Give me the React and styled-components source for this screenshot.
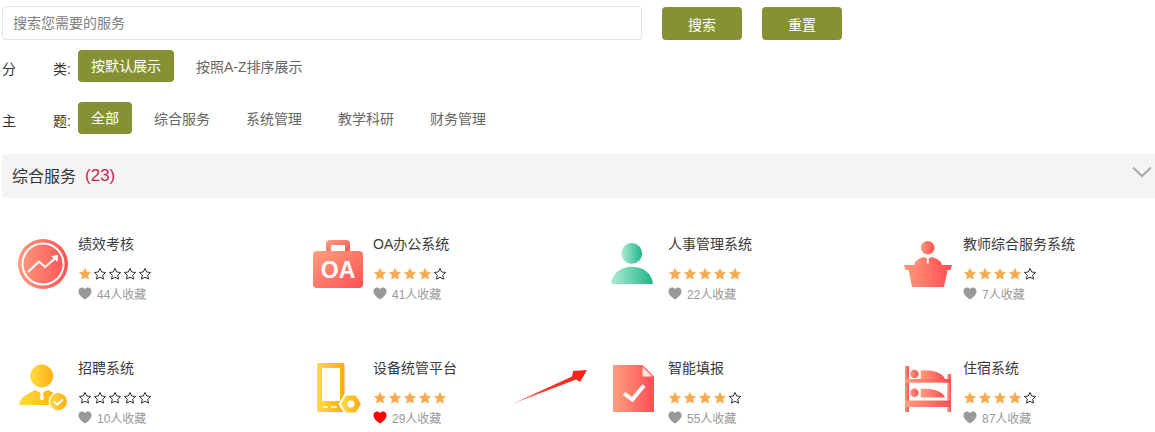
import React from 'react';
import styled, { createGlobalStyle } from 'styled-components';

const Global = createGlobalStyle`
  html, body { margin: 0; padding: 0; background: #fff; }
  body { font-family: "Liberation Sans", "Noto Sans CJK SC", sans-serif; font-size: 14px; color: #333; overflow: hidden; }
`;

const Page = styled.div`
  position: relative;
  width: 1155px;
  height: 432px;
  padding: 6px 0 0 2px;
  box-sizing: border-box;
  overflow: hidden;
`;

const SearchRow = styled.div`
  display: flex;
  align-items: flex-start;
  height: 34px;
`;

const SearchInput = styled.input`
  width: 640px;
  height: 34px;
  box-sizing: border-box;
  padding: 0 10px;
  border: 1px solid #e3e3e3;
  border-radius: 4px;
  font: inherit;
  outline: none;
  &::placeholder { color: #808080; opacity: 1; }
`;

const ActionButton = styled.button`
  width: 80px;
  height: 33px;
  margin: 1px 0 0 20px;
  border: 0;
  border-radius: 4px;
  background: #869136;
  color: #fff;
  font: inherit;
  padding: 0;
`;

const FilterRow = styled.div`
  display: flex;
  align-items: center;
  height: 32px;
  margin-top: ${p => p.$top}px;
`;

const FilterLabel = styled.div`
  width: 69px;
  margin-right: 7px;
  display: flex;
  justify-content: space-between;
  padding-top: 3px;
  color: #333;
`;

const Tab = styled.div`
  height: 32px;
  line-height: 32px;
  padding: ${p => (p.$active ? '0 13px' : '1px 14px 0 13px')};
  box-sizing: border-box;
  margin-right: 9px;
  border-radius: 4px;
  background: ${p => (p.$active ? '#869136' : 'transparent')};
  color: ${p => (p.$active ? '#fff' : '#666')};
  white-space: nowrap;
`;

const SectionBar = styled.div`
  display: flex;
  align-items: center;
  height: 44px;
  margin-top: 20px;
  padding: 0 3px 0 10px;
  background: #f4f4f4;
  font-size: 16px;
  color: #333;
`;

const SectionTitle = styled.div`
  display: flex;
  align-items: center;
  margin-top: -3px;
`;

const Count = styled.span`
  margin-left: 9px;
  margin-top: 2px;
  font-size: 17px;
  color: #c7254e;
`;

const Chevron = styled.svg`
  width: 20px;
  height: 12px;
  margin-left: auto;
  margin-top: -8px;
`;

const Grid = styled.div`
  display: grid;
  grid-template-columns: repeat(4, 295px);
  grid-auto-rows: 124px;
  padding-top: 36px;
`;

const Card = styled.div`
  display: flex;
  padding-left: 16px;
`;

const IconBox = styled.svg`
  width: 50px;
  height: 50px;
  flex: none;
  margin: 5px 10px 0 0;
  display: block;
  overflow: visible;
`;

const Info = styled.div`
  display: flex;
  flex-direction: column;
`;

const Name = styled.div`
  height: 20px;
  line-height: 20px;
  color: #3a3a3a;
  white-space: nowrap;
`;

const Stars = styled.div`
  display: flex;
  gap: 1px;
  margin-top: 13px;
  height: 14px;
`;

const Star = styled.svg`
  width: 14px;
  height: 14px;
  display: block;
`;

const Fav = styled.div`
  display: flex;
  align-items: center;
  margin-top: 5px;
  height: 14px;
  font-size: 12px;
  color: #999;
`;

const Heart = styled.svg`
  width: 14px;
  height: 13px;
  margin-right: 5px;
  display: block;
`;

const Arrow = styled.svg`
  position: absolute;
  left: 510px;
  top: 366px;
  width: 80px;
  height: 42px;
`;

const STAR = 'M7 1.4 L8.7 5 L12.6 5.5 L9.7 8.2 L10.5 12.1 L7 10.2 L3.5 12.1 L4.3 8.2 L1.4 5.5 L5.3 5 Z';

const Rating = ({ value }) => (
  <Stars>
    {[0, 1, 2, 3, 4].map(i => (
      <Star key={i} viewBox="0 0 14 14">
        {i < value
          ? <path d={STAR} fill="#f6ab52" stroke="#f6ab52" strokeWidth="0.6" strokeLinejoin="round" />
          : <path d={STAR} fill="#fff" stroke="#333" strokeWidth="1" strokeLinejoin="round" />}
      </Star>
    ))}
  </Stars>
);

const Grad = ({ id, from, to, diagonal }) => (
  <defs>
    <linearGradient id={id} x1="0" y1="0" x2="1" y2={diagonal ? 1 : 0}>
      <stop offset="0" stopColor={from} />
      <stop offset="1" stopColor={to} />
    </linearGradient>
  </defs>
);

const icons = {
  trend: (
    <>
      <Grad id="g1" from="#ff9a7e" to="#ff5254" />
      <circle cx="25" cy="25" r="25" fill="url(#g1)" />
      <circle cx="25" cy="25" r="20.5" fill="none" stroke="#fff" strokeWidth="2" />
      <path d="M10 33 L21 22.5 L27 28 L37 19.5" fill="none" stroke="#fff" strokeWidth="2" />
      <path d="M33 17 L40 16 L39.5 23 Z" fill="#fff" />
    </>
  ),
  oa: (
    <>
      <Grad id="g2" from="#ffa07e" to="#ff5054" diagonal />
      <path fillRule="evenodd" d="M17 1 H33 Q37 1 37 5 V13 H32 V6 H18 V13 H13 V5 Q13 1 17 1 Z" fill="url(#g2)" />
      <rect x="0" y="12" width="50" height="37" rx="4" fill="url(#g2)" />
      <text x="25" y="38.5" textAnchor="middle" fontFamily="Liberation Sans" fontWeight="700" fontSize="23" fill="#fff">OA</text>
    </>
  ),
  person: (
    <>
      <Grad id="g3" from="#aeecd6" to="#1db588" />
      <circle cx="23.7" cy="14.3" r="10.4" fill="url(#g3)" />
      <path d="M3 45 C4 34 13 27.7 24 27.7 C35 27.7 44 34 45 45 Z" fill="url(#g3)" />
    </>
  ),
  podium: (
    <>
      <Grad id="g4" from="#ff9a7e" to="#ff4d52" />
      <circle cx="24.7" cy="8.7" r="6.8" fill="url(#g4)" />
      <path d="M11 26 C12 21 16 19.5 21 18 L24.7 20 L28.5 18 C33 19.5 38 21 39 26 Z" fill="url(#g4)" />
      <path d="M24 20 H25.6 L25.8 24.6 H23.8 Z" fill="#fff" />
      <path d="M1 26 H49 L47.6 31 H44.6 L41 48 H9 L5.6 31 H2.4 Z" fill="url(#g4)" />
    </>
  ),
  staff: (
    <>
      <Grad id="g5" from="#ffdc42" to="#ffae12" />
      <circle cx="23.7" cy="13" r="11.4" fill="url(#g5)" />
      <path d="M1 42 C2 33 10 31 17 27 L23 30 L30 27 C35 29 38 31 39 42 Z" fill="url(#g5)" />
      <path d="M22 28.5 H25.6 L25 31.4 L26 35.5 L23.8 37.5 L21.7 35.5 L22.6 31.4 Z" fill="#fff" />
      <circle cx="40.3" cy="38.7" r="9.8" fill="#fff" />
      <circle cx="40.3" cy="38.7" r="8.6" fill="url(#g5)" />
      <path d="M35.8 38.6 L39.2 41.6 L44.8 36.4" fill="none" stroke="#fff" strokeWidth="2" />
    </>
  ),
  device: (
    <>
      <Grad id="g6" from="#ffdc42" to="#ffa912" />
      <rect x="4" y="0" width="27.5" height="49" rx="2" fill="url(#g6)" />
      <rect x="9" y="5" width="18" height="33" fill="#fff" />
      <path d="M10 44 H15 M18 44 H24" stroke="#fff" strokeWidth="1.4" />
      <path d="M25.5 41 L31.5 31 H44 L50 41 L44 51 H31.5 Z" fill="#fff" />
      <path d="M28 41 L33 32.5 H42.8 L47.8 41 L42.8 49.5 H33 Z" fill="url(#g6)" />
      <circle cx="37.8" cy="41" r="3.6" fill="#fff" />
    </>
  ),
  report: (
    <>
      <Grad id="g7" from="#ff9f7e" to="#ff4f54" />
      <path d="M5 2 H34.5 L46 13.5 V49 H5 Z" fill="url(#g7)" />
      <path d="M34.5 4 L44.5 13.5 H34.5 Z" fill="#ffe5e0" />
      <path d="M16 30.5 L24.3 36.5 L36 22.5" fill="none" stroke="#fff" strokeWidth="4" />
    </>
  ),
  bunk: (
    <>
      <Grad id="g8" from="#ff9f7e" to="#ff4d52" />
      <g fill="url(#g8)">
        <rect x="2" y="3" width="4" height="46" />
        <rect x="44.3" y="11" width="3.7" height="38" />
        <rect x="2" y="16" width="46" height="3.7" />
        <rect x="2" y="37.5" width="46" height="6.5" />
        <circle cx="11.3" cy="11" r="4.2" />
        <circle cx="11.3" cy="29.8" r="4.2" />
        <path d="M17.7 16 V7.5 C28 6.5 39 9 42 16 Z" />
        <path d="M17.7 34.5 V26 C28 25 39 27.5 42 34.5 Z" />
      </g>
    </>
  ),
};

const services = [
  { name: '绩效考核', stars: 1, count: 44, icon: 'trend' },
  { name: 'OA办公系统', stars: 4, count: 41, icon: 'oa' },
  { name: '人事管理系统', stars: 5, count: 22, icon: 'person' },
  { name: '教师综合服务系统', stars: 4, count: 7, icon: 'podium' },
  { name: '招聘系统', stars: 0, count: 10, icon: 'staff' },
  { name: '设备统管平台', stars: 5, count: 29, icon: 'device', liked: true },
  { name: '智能填报', stars: 4, count: 55, icon: 'report' },
  { name: '住宿系统', stars: 4, count: 87, icon: 'bunk' },
];

const Filter = ({ a, b, tabs, top }) => (
  <FilterRow $top={top}>
    <FilterLabel><span>{a}</span><span>{b}:</span></FilterLabel>
    {tabs.map((t, i) => <Tab key={t} $active={i === 0}>{t}</Tab>)}
  </FilterRow>
);

export default function App() {
  return (
    <Page>
      <Global />
      <SearchRow>
        <SearchInput placeholder="搜索您需要的服务" />
        <ActionButton>搜索</ActionButton>
        <ActionButton>重置</ActionButton>
      </SearchRow>
      <Filter a="分" b="类" top={10} tabs={['按默认展示', '按照A-Z排序展示']} />
      <Filter a="主" b="题" top={20} tabs={['全部', '综合服务', '系统管理', '教学科研', '财务管理']} />
      <SectionBar>
        <SectionTitle>综合服务<Count>(23)</Count></SectionTitle>
        <Chevron viewBox="0 0 20 12">
          <path d="M1 1.5 L10 10 L19 1.5" fill="none" stroke="#aaa" strokeWidth="2" />
        </Chevron>
      </SectionBar>
      <Grid>
        {services.map(s => (
          <Card key={s.name}>
            <IconBox viewBox="0 0 50 50">{icons[s.icon]}</IconBox>
            <Info>
              <Name>{s.name}</Name>
              <Rating value={s.stars} />
              <Fav>
                <Heart viewBox="0 0 14 13">
                  <path d="M7 12.5 C3 9.5 0.5 7.5 0.5 4.2 C0.5 2 2.2 0.6 4 0.6 C5.3 0.6 6.4 1.2 7 2.2 C7.6 1.2 8.7 0.6 10 0.6 C11.8 0.6 13.5 2 13.5 4.2 C13.5 7.5 11 9.5 7 12.5 Z" fill={s.liked ? '#f00' : '#999'} />
                </Heart>
                {s.count}人收藏
              </Fav>
            </Info>
          </Card>
        ))}
      </Grid>
      <Arrow viewBox="0 0 80 42">
        <defs>
          <linearGradient id="arrowG" x1="0" y1="1" x2="1" y2="0">
            <stop offset="0" stopColor="#ff8a80" />
            <stop offset="0.4" stopColor="#fb3a30" />
            <stop offset="1" stopColor="#fa1e14" />
          </linearGradient>
        </defs>
        <path d="M2 38 L62 10.5 L63 5 L77 4 L70 16 L66 13.5 Z" fill="url(#arrowG)" />
      </Arrow>
    </Page>
  );
}
